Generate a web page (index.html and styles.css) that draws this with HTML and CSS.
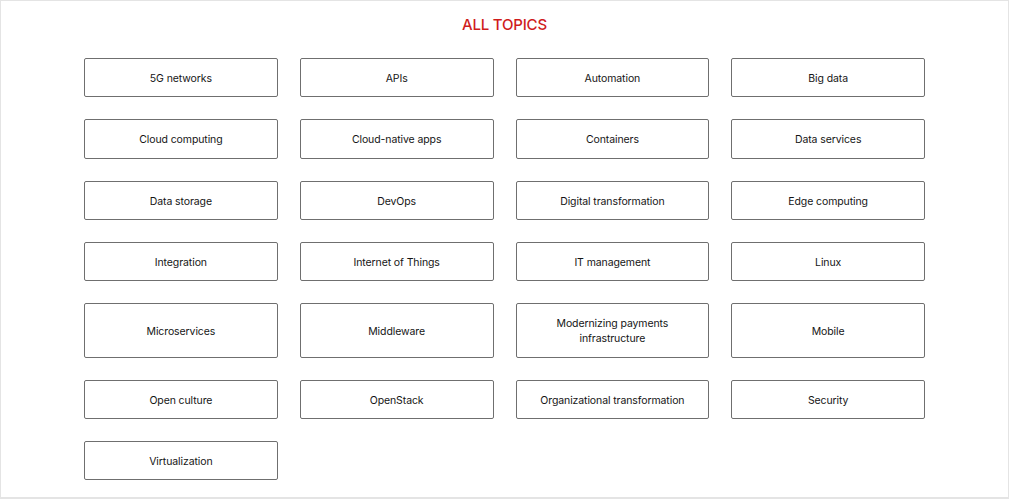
FILE: index.html
```html
<!DOCTYPE html>
<html lang="en">
<head>
<meta charset="utf-8">
<title>All topics</title>
<link rel="stylesheet" href="styles.css">
</head>
<body>
<main class="page">
  <h2 class="title">ALL TOPICS</h2>
  <ul class="topics">
    <li><a class="topic" href="#">5G networks</a></li>
    <li><a class="topic" href="#">APIs</a></li>
    <li><a class="topic" href="#">Automation</a></li>
    <li><a class="topic" href="#">Big data</a></li>
    <li><a class="topic" href="#">Cloud computing</a></li>
    <li><a class="topic" href="#">Cloud-native apps</a></li>
    <li><a class="topic" href="#">Containers</a></li>
    <li><a class="topic" href="#">Data services</a></li>
    <li><a class="topic" href="#">Data storage</a></li>
    <li><a class="topic" href="#">DevOps</a></li>
    <li><a class="topic" href="#">Digital transformation</a></li>
    <li><a class="topic" href="#">Edge computing</a></li>
    <li><a class="topic" href="#">Integration</a></li>
    <li><a class="topic" href="#">Internet of Things</a></li>
    <li><a class="topic" href="#">IT management</a></li>
    <li><a class="topic" href="#">Linux</a></li>
    <li><a class="topic" href="#">Microservices</a></li>
    <li><a class="topic" href="#">Middleware</a></li>
    <li><a class="topic" href="#">Modernizing payments infrastructure</a></li>
    <li><a class="topic" href="#">Mobile</a></li>
    <li><a class="topic" href="#">Open culture</a></li>
    <li><a class="topic" href="#">OpenStack</a></li>
    <li><a class="topic" href="#">Organizational transformation</a></li>
    <li><a class="topic" href="#">Security</a></li>
    <li><a class="topic" href="#">Virtualization</a></li>
  </ul>
</main>
</body>
</html>
```
FILE: styles.css
```css
html, body {
  margin: 0;
  padding: 0;
  background: #ffffff;
}
body {
  font-family: Inter, "Noto Sans", "Liberation Sans", sans-serif;
  color: #151515;
}
.page {
  box-sizing: border-box;
  width: 1009px;
  height: 499px;
  border: 1px solid #e4e4e4;
  border-bottom-width: 2px;
  padding: 15px 83px 0;
}
.title {
  margin: 0;
  text-align: center;
  font-size: 15px;
  line-height: 18px;
  font-weight: 500;
  color: #cf1c1c;
  letter-spacing: -0.2px;
}
.topics {
  list-style: none;
  margin: 24px 0 0;
  padding: 0;
  display: grid;
  grid-template-columns: repeat(4, 1fr);
  column-gap: 22px;
  row-gap: 22px;
}
.topics li {
  display: flex;
}
.topic {
  flex: 1;
  display: flex;
  align-items: center;
  justify-content: center;
  text-align: center;
  padding: 12px 18px 10px;
  border: 1px solid #6f6f6f;
  border-radius: 2px;
  font-size: 10.5px;
  line-height: 15.25px;
  letter-spacing: -0.1px;
  color: #151515;
  text-decoration: none;
}
```
